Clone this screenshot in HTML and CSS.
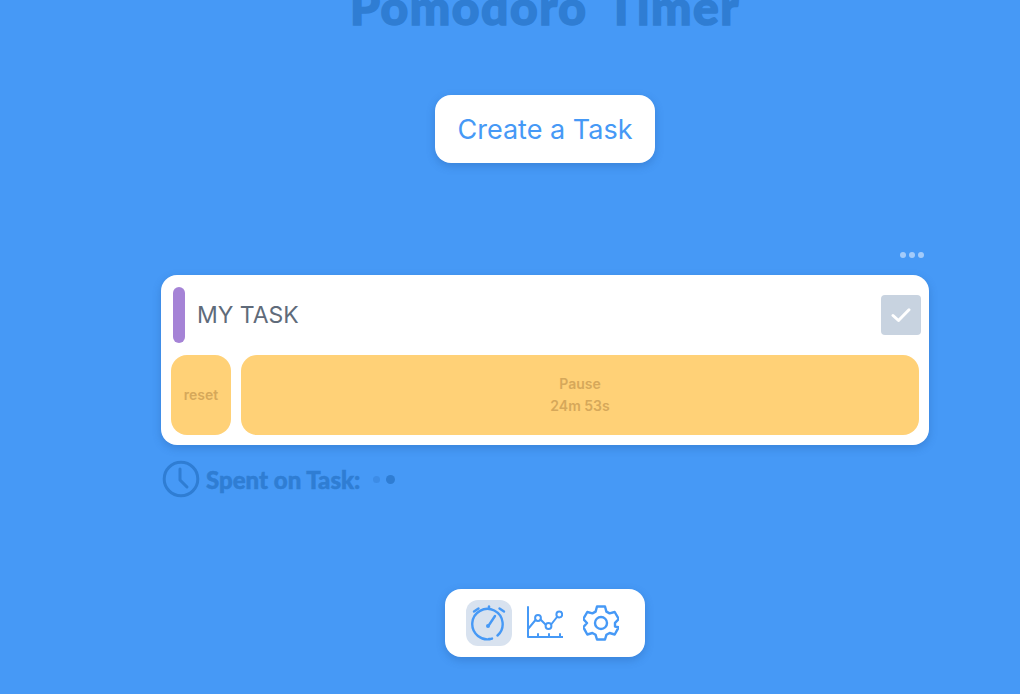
FILE: index.html
```html
<!DOCTYPE html>
<html lang="en">
<head>
  <meta charset="UTF-8" />
  <title>Pomodoro Timer</title>
  <meta name="viewport" content="width=device-width, initial-scale=1" />
  <link rel="stylesheet" href="styles.css">
</head>
<body>
  <main class="page">
    <h1 class="title">Pomodoro Timer</h1>

    <button class="create-btn" type="button">Create a Task</button>

    <section class="task-area">
      <div class="more-dots"><span></span><span></span><span></span></div>

      <div class="task-card">
        <div class="task-head">
          <span class="task-color"></span>
          <span class="task-name">MY TASK</span>
          <button class="task-check" type="button" aria-label="Done">
            <svg viewBox="0 0 20 16" width="20" height="16"><path d="M2 8.5 L7.5 13.5 L18 2.8" fill="none" stroke="#fff" stroke-width="3" stroke-linecap="round" stroke-linejoin="round"/></svg>
          </button>
        </div>
        <div class="task-actions">
          <button class="action-btn reset-btn" type="button">reset</button>
          <button class="action-btn pause-btn" type="button">Pause<br>24m 53s</button>
        </div>
      </div>

      <div class="spent">
        <svg class="spent-icon" viewBox="0 0 38 38" width="38" height="38"><circle cx="19" cy="19" r="16.8" fill="none" stroke="#2f7dd3" stroke-width="3"/><path d="M18 9 V20 L25 27" fill="none" stroke="#2f7dd3" stroke-width="3" stroke-linecap="round" stroke-linejoin="round"/></svg>
        <span class="spent-label">Spent on Task:</span>
        <span class="loader"><i></i><i></i></span>
      </div>
    </section>

    <nav class="tabbar">
      <a class="tab tab-active" href="#" aria-label="Timer">
        <svg viewBox="0 0 36 36" width="36" height="36" fill="none" stroke="#4699f6" stroke-width="2.4" stroke-linecap="round">
          <path d="M26.5 30.5 A15.2 15.2 0 1 0 21 33.6 M21 33.6 Q19.5 34 18 34"/>
          <path d="M18 3.5 V1.5"/>
          <path d="M3 6.5 L7.5 3.5"/>
          <path d="M33 6.5 L28.5 3.5"/>
          <path d="M18 20 L24 11"/>
          <circle cx="17" cy="21" r="2" fill="#4699f6" stroke="none"/>
        </svg>
      </a>
      <a class="tab" href="#" aria-label="Stats">
        <svg viewBox="0 0 36 36" width="36" height="36" fill="none" stroke="#4699f6" stroke-width="2" stroke-linecap="round" stroke-linejoin="round">
          <path d="M1 2 V32 H36"/>
          <path d="M11 29 V32 M22 29 V32 M33 29 V32"/>
          <path d="M1 24 L8.5 15 M13.5 14.5 L18.5 19.5 M24.5 19 L30 12"/>
          <circle cx="11" cy="13" r="2.9"/>
          <circle cx="21.5" cy="21" r="2.9"/>
          <circle cx="32.3" cy="9.5" r="2.9"/>
        </svg>
      </a>
      <a class="tab" href="#" aria-label="Settings">
        <svg viewBox="0 0 36 36" width="36" height="36" fill="none" stroke="#4699f6" stroke-width="2.4" stroke-linejoin="round">
          <path d="M14 1.5 H22 L23.4 6.6 L26.6 8.4 L31.7 7 L35.7 14 L32 17.8 V20.2 L32 21.6 L35.7 22.2 L31.7 29.5 L26.6 28 L23.4 29.8 L22 34.5 H14 L12.6 29.8 L9.4 28 L4.3 29.5 L0.3 22.2 L4 18 L0.3 14 L4.3 7 L9.4 8.4 L12.6 6.6 Z"/>
          <circle cx="18" cy="18" r="6"/>
        </svg>
      </a>
    </nav>
  </main>
</body>
</html>
```

FILE: styles.css
```css
* {
  box-sizing: border-box;
}
html, body {
  height: 694px;
  margin: 0;
  overflow: hidden;
}
body {
  background: #4699f6;
  font-family: Inter, "Liberation Sans", sans-serif;
}
button {
  border: none;
  font-family: inherit;
  cursor: pointer;
}
.page {
  display: flex;
  flex-direction: column;
  align-items: center;
  padding-left: 70px;
}
.title {
  margin: -22px 0 0;
  height: 58px;
  font-family: Lato, "Noto Sans", sans-serif;
  font-size: 48px;
  line-height: 58px;
  font-weight: 900;
  word-spacing: 8px;
  letter-spacing: 1.5px;
  color: #2f7dd3;
  -webkit-text-stroke: 1.5px #2f7dd3;
  white-space: nowrap;
}
.create-btn {
  width: 220px;
  height: 68px;
  margin-top: 59px;
  background: #fff;
  border-radius: 16px;
  color: #4699f6;
  font-size: 27px;
  box-shadow: 0 3px 8px rgba(30, 80, 150, 0.3);
}
.task-area {
  width: 768px;
  margin-top: 89px;
}
.more-dots {
  display: flex;
  justify-content: flex-end;
  gap: 3px;
  height: 23px;
  padding: 0 5px 0 0;
}
.more-dots span {
  width: 6px;
  height: 6px;
  border-radius: 50%;
  background: #a3cbfa;
}
.task-card {
  height: 170px;
  padding: 12px 10px 10px;
  background: #fff;
  border-radius: 16px;
  box-shadow: 0 3px 8px rgba(30, 80, 150, 0.3);
}
.task-head {
  display: flex;
  align-items: center;
  height: 56px;
  padding-left: 2px;
}
.task-color {
  width: 12px;
  height: 56px;
  border-radius: 6px;
  background: #a583d6;
}
.task-name {
  flex: 1;
  margin-left: 12px;
  font-size: 23px;
  color: #5f6b7a;
}
.task-check {
  display: flex;
  align-items: center;
  justify-content: center;
  width: 40px;
  height: 40px;
  margin-right: -2px;
  padding: 0;
  border-radius: 4px;
  background: #c8d3e0;
}
.task-actions {
  display: flex;
  gap: 10px;
  margin-top: 12px;
}
.action-btn {
  height: 80px;
  padding: 0;
  border-radius: 16px;
  background: #ffd177;
  color: #d6a85a;
  font-size: 14px;
  line-height: 22px;
  font-weight: 600;
}
.reset-btn {
  width: 60px;
}
.pause-btn {
  flex: 1;
}
.spent {
  display: flex;
  align-items: center;
  margin-top: 15px;
  height: 38px;
  padding-left: 1px;
}
.spent-label {
  margin-left: 6px;
  font-family: Lato, "Noto Sans", sans-serif;
  font-size: 24px;
  font-weight: 900;
  color: #2f7dd3;
  -webkit-text-stroke: 0.5px #2f7dd3;
}
.loader {
  display: flex;
  gap: 6px;
  margin-left: 13px;
}
.loader i {
  width: 7px;
  height: 7px;
  border-radius: 50%;
  background: #3d8ce6;
}
.loader i + i {
  width: 9px;
  height: 9px;
  background: #2f7dd3;
}
.loader {
  align-items: center;
}
.tabbar {
  display: flex;
  align-items: center;
  gap: 10px;
  width: 200px;
  height: 68px;
  margin-top: 91px;
  padding-left: 21px;
  background: #fff;
  border-radius: 16px;
  box-shadow: 0 3px 8px rgba(30, 80, 150, 0.3);
}
.tab {
  display: flex;
  align-items: center;
  justify-content: center;
  width: 46px;
  height: 46px;
  border-radius: 12px;
}
.tab-active {
  background: #d8e2ef;
}
```
